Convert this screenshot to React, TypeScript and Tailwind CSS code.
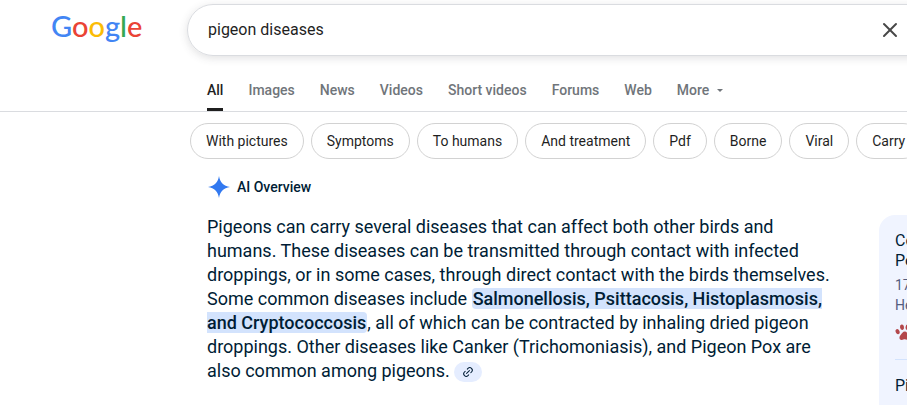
import { Link2, X } from "lucide-react";

const tabs = ["Images", "News", "Videos", "Short videos", "Forums", "Web"];
const chips = ["With pictures", "Symptoms", "To humans", "And treatment", "Pdf", "Borne", "Viral", "Carry"];

function Logo() {
  return (
    <a href="#" aria-label="Google" className="w-[136px] shrink-0 pl-3 font-['Lato'] text-[29px] leading-[44px] font-medium text-[#4285f4]">
      G<span className="text-[#ea4335]">o</span>
      <span className="text-[#fbbc05]">o</span>g
      <span className="text-[#34a853]">l</span>
      <span className="text-[#ea4335]">e</span>
    </a>
  );
}

function Paw() {
  return (
    <svg viewBox="0 0 20 20" className="size-5 shrink-0" fill="#b3474b">
      <ellipse cx="2.6" cy="8.6" rx="1.9" ry="2.6" transform="rotate(-25 2.6 8.6)" />
      <ellipse cx="7" cy="4.2" rx="2" ry="2.8" transform="rotate(-10 7 4.2)" />
      <ellipse cx="12.6" cy="4.2" rx="2" ry="2.8" transform="rotate(10 12.6 4.2)" />
      <ellipse cx="17" cy="8.6" rx="1.9" ry="2.6" transform="rotate(25 17 8.6)" />
      <path d="M9.8 8.6c-2 0-2.8 2-4.200 3.400-1.600 1.500-1.800 4.700 1 4.900 1.300.1 2-.6 3.200-.6s1.900.7 3.200.6c2.800-.2 2.600-3.400 1-4.900-1.400-1.400-2.200-3.400-4.200-3.400z" />
    </svg>
  );
}

export default function App() {
  return (
    <div className="min-h-screen overflow-hidden bg-white font-['Roboto',sans-serif] text-sm text-[#1f1f1f]">
      <header className="border-b border-[#dadce0]">
        <div className="flex pt-1 pl-[39px]">
          <Logo />
          <form className="ml-3 flex h-[52px] w-[780px] shrink-0 items-center rounded-full border border-[#dadce0] pl-5 shadow-[0_2px_8px_rgba(60,64,67,0.16)]">
            <input aria-label="Search" defaultValue="pigeon diseases" className="w-[660px] text-base outline-none" />
            <button type="button" aria-label="Clear" className="ml-2.5 text-[#474747]">
              <X size={24} strokeWidth={2} />
            </button>
          </form>
        </div>
        <nav className="flex gap-[25px] pt-6 pl-[207px] font-medium whitespace-nowrap text-[#70757a]">
          <a href="#" className="border-b-3 border-[#1f1f1f] pb-2 leading-5 text-[#1f1f1f]">All</a>
          {tabs.map((tab) => (
            <a key={tab} href="#" className="leading-5">{tab}</a>
          ))}
          <button type="button" className="flex h-5 items-center gap-2">
            More
            <svg viewBox="0 0 6 3" className="h-[3px] w-1.5" fill="currentColor">
              <path d="M0 0h6L3 3z" />
            </svg>
          </button>
        </nav>
      </header>

      <div className="flex gap-[7px] pt-[11px] pl-[190px]">
        {chips.map((chip) => (
          <button key={chip} type="button" className="h-9 shrink-0 rounded-full border border-[#d2d2d2] px-[15px]">
            {chip}
          </button>
        ))}
      </div>

      <main className="pl-[207px] text-[#001d35]">
        <h2 className="flex items-center gap-1.5 pt-4 font-medium leading-6">
          <svg viewBox="0 0 24 24" className="size-6" fill="#3279f0">
            <path d="M12 1c1 6.500 4.500 10 11 11-6.500 1-10 4.500-11 11-1-6.500-4.500-10-11-11 6.500-1 10-4.500 11-11z" />
          </svg>
          AI Overview
        </h2>
        <div className="flex items-start pt-4">
          <p className="w-[672px] shrink-0 text-lg leading-6 whitespace-nowrap">
            Pigeons can carry several diseases that can affect both other birds and<br />
            humans. These diseases can be transmitted through contact with infected<br />
            droppings, or in some cases, through direct contact with the birds themselves.<br />
            Some common diseases include{" "}
            <mark className="rounded bg-[#d3e3fd] px-px font-medium text-inherit">
              Salmonellosis, Psittacosis, Histoplasmosis,<br />
              and Cryptococcosis
            </mark>
            , all of which can be contracted by inhaling dried pigeon<br />
            droppings. Other diseases like Canker (Trichomoniasis), and Pigeon Pox are<br />
            also common among pigeons.{" "}
            <button type="button" aria-label="Sources" className="inline-flex h-5 w-7 items-center justify-center rounded-full bg-[#e5edff] align-middle">
              <Link2 size={12} strokeWidth={2} className="-rotate-45" />
            </button>
          </p>
          <aside className="w-[360px] shrink-0 rounded-2xl bg-[#f0f4ff] px-4 pt-4 pb-8">
            <h3 className="text-base leading-5">Co<br />Pe</h3>
            <p className="pt-1 leading-5 text-[#545d7e]">17<br />He</p>
            <div className="pt-2 pb-4">
              <Paw />
            </div>
            <h3 className="border-t border-[#d3e3fd] pt-4 text-base leading-5">Pi</h3>
          </aside>
        </div>
      </main>
    </div>
  );
}
